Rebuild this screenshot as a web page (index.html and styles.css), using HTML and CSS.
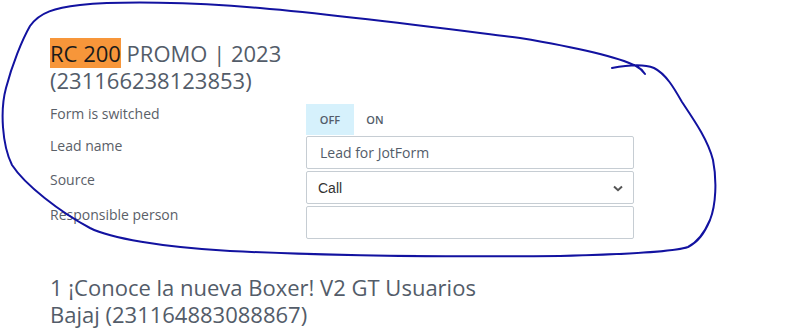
FILE: index.html
```html
<!DOCTYPE html>
<html lang="en">
<head>
    <meta charset="UTF-8">
    <title>Forms</title>
    <link rel="stylesheet" href="styles.css">
</head>
<body>
    <div class="page">
        <div class="form-block">
            <h2 class="form-title"><span class="mark">RC 200</span> PROMO | 2023 (231166238123853)</h2>
            <div class="fields">
                <div class="label">Form is switched</div>
                <div class="toggle">
                    <span class="toggle-btn active">OFF</span>
                    <span class="toggle-btn">ON</span>
                </div>

                <div class="label">Lead name</div>
                <div class="field"><input class="input" type="text" value="Lead for JotForm"></div>

                <div class="label">Source</div>
                <div class="field select-wrap">
                    <select class="input select">
                        <option>Call</option>
                    </select>
                    <svg class="chevron" width="10" height="7" viewBox="0 0 10 7"><path d="M1 1.5 L5 5.2 L9 1.5" fill="none" stroke="#555" stroke-width="2"/></svg>
                </div>

                <div class="label">Responsible person</div>
                <div class="field"><input class="input" type="text" value=""></div>
            </div>
        </div>

        <div class="form-block">
            <h2 class="form-title">1 ¡Conoce la nueva Boxer! V2 GT Usuarios Bajaj (231164883088867)</h2>
        </div>
    </div>

    <!-- pen annotation drawn over the screenshot -->
    <svg class="scribble" width="793" height="328" viewBox="0 0 793 328">
        <path d="M612 68 C628 65 644 64 654 68
                 C666 74 674 88 682 102
                 C694 120 708 140 713 160
                 C717 180 716 205 710 220
                 C704 234 698 242 688 247
                 C676 251 640 254 560 256
                 C450 257 330 256 230 251
                 C160 247 110 238 90 228
                 C60 212 25 185 12 165
                 C2 145 0 110 6 88
                 C12 65 22 40 30 26
                 C40 12 55 8 80 5
                 C120 1 190 2 260 8
                 C350 16 440 28 520 38
                 C580 48 620 58 636 66
                 C640 68 643 71 645 74"
              fill="none" stroke="#1212a0" stroke-width="2" stroke-linecap="round" stroke-linejoin="round"/>
    </svg>
</body>
</html>
```

FILE: styles.css
```css
body{
    margin: 0;
    background: #fff;
    font-family: "Open Sans", "Noto Sans", sans-serif;
    color: #535c69;
    overflow: hidden;
}
.page{
    padding: 40px 0 0 50px;
}
.form-block{
    margin-bottom: 35px;
}
.form-block:last-child{
    margin-bottom: 0;
}
.form-title{
    margin: 0;
    width: 432px;
    font-size: 22px;
    line-height: 27px;
    font-weight: 400;
    color: #535c69;
}
.mark{
    background: #f7963a;
    color: #1b1b1b;
}
.fields{
    margin-top: 10px;
    display: grid;
    grid-template-columns: 256px 328px;
    row-gap: 1px;
}
.label{
    font-size: 14px;
    line-height: 17px;
    padding-top: 1px;
    color: #5a6068;
}
.toggle{
    display: flex;
    height: 31px;
}
.toggle-btn{
    display: flex;
    align-items: center;
    justify-content: center;
    width: 48px;
    font-size: 11px;
    font-weight: 600;
    color: #535c69;
}
.toggle-btn + .toggle-btn{
    width: 42px;
}
.toggle-btn.active{
    background: #d6f1fc;
}
.field{
    height: 33px;
}
.input{
    box-sizing: border-box;
    width: 100%;
    height: 33px;
    margin: 0;
    border: 1px solid #c6cdd3;
    border-radius: 2px;
    padding: 0 13px;
    background: #fff;
    font-family: "Open Sans", sans-serif;
    font-size: 14px;
    color: #535c69;
    outline: none;
}
.select-wrap{
    position: relative;
    margin-top: 1px;
}
.select{
    -webkit-appearance: none;
    appearance: none;
    padding: 0 11px;
    font-family: "Liberation Sans", Arial, sans-serif;
    color: #333;
}
.chevron{
    position: absolute;
    right: 11px;
    top: 14px;
    pointer-events: none;
}
.fields .field:last-child{
    margin-top: 1px;
}
.scribble{
    position: absolute;
    left: 0;
    top: 0;
    pointer-events: none;
}
```
